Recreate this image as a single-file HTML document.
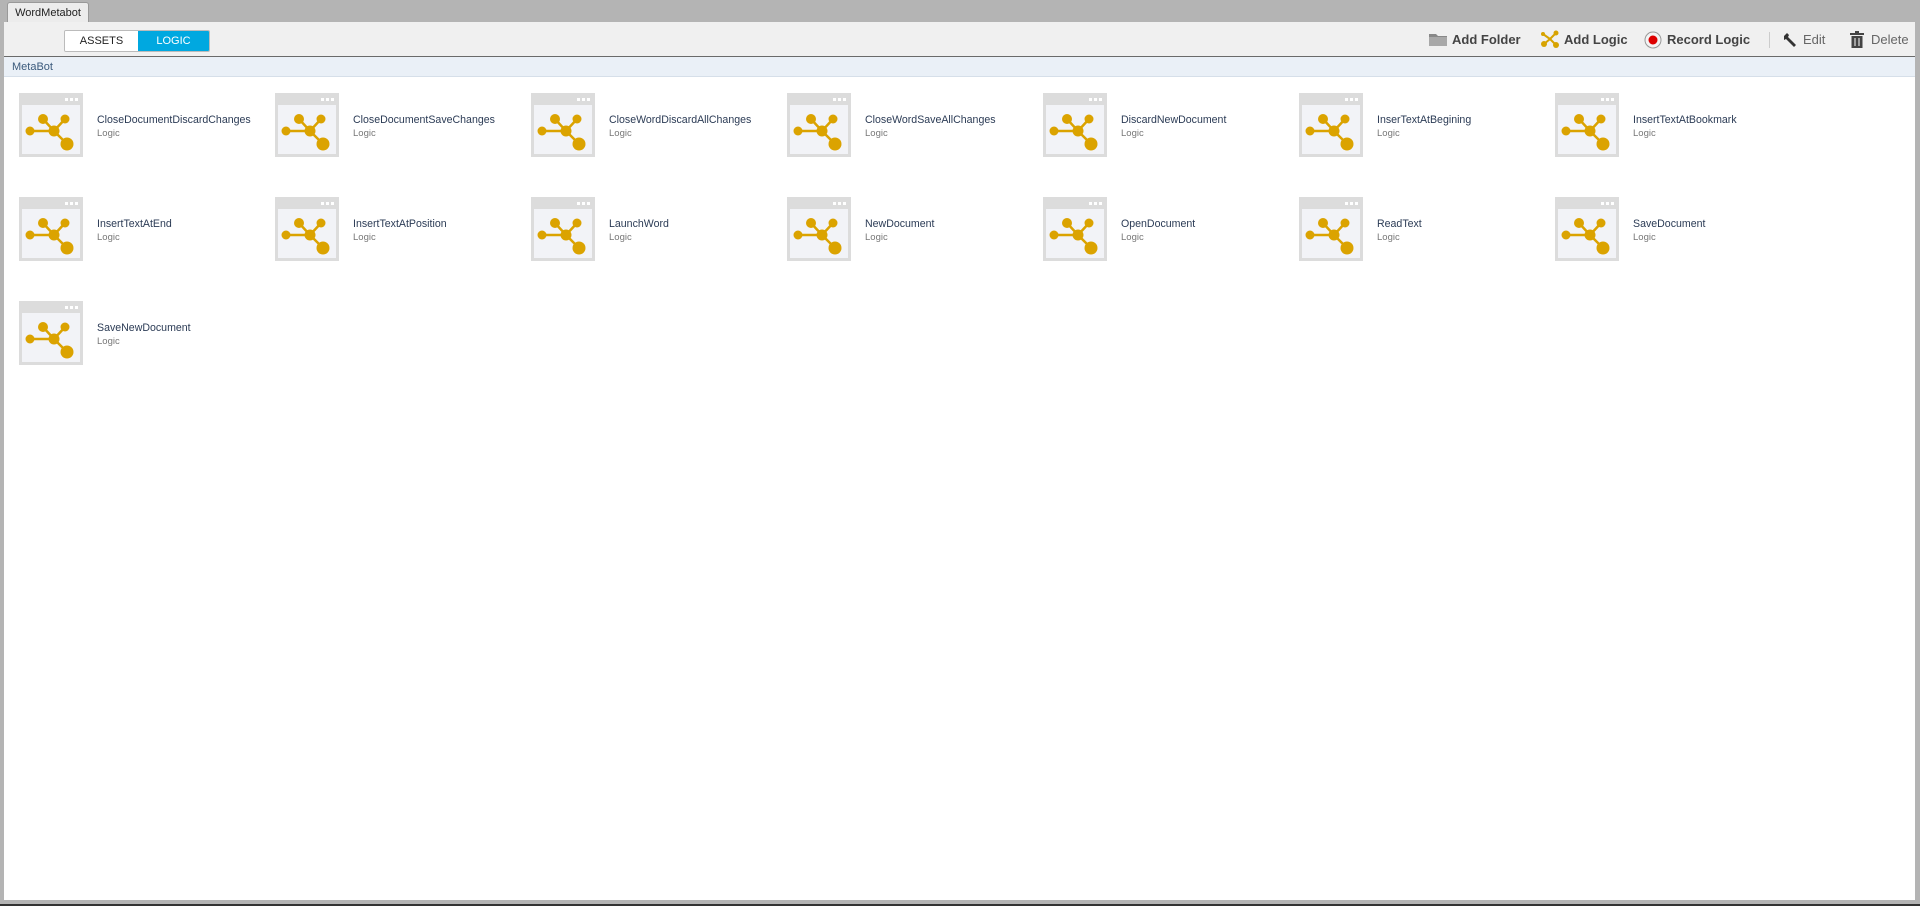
<!DOCTYPE html><html><head><style>
body{margin:0;width:1920px;height:906px;background:#b4b4b4;font-family:"Liberation Sans",Arial,sans-serif;position:relative;overflow:hidden}
.tab{position:absolute;left:7px;top:2px;width:80px;height:20px;background:#ececec;border:1px solid #999;border-bottom:none;border-radius:3px 3px 0 0;font-size:11px;line-height:20px;text-align:center;color:#222}
.panel{position:absolute;left:4px;top:22px;width:1911px;height:878px;background:#fff}
.tb{position:absolute;left:0;top:0;width:100%;height:34px;background:#f0f0f0;border-bottom:1px solid #6a6a6a}
.tog{position:absolute;left:60px;top:8px;width:144px;height:20px;border:1px solid #bbb;border-radius:2px;font-size:11px;line-height:20px;overflow:hidden}
.tog span{position:absolute;top:0;height:20px;text-align:center}
.bc{position:absolute;left:0;top:35px;width:100%;height:20px;background:#eaf0f7;border-bottom:1px solid #d6dfe9;font-size:11px;line-height:20px;color:#3b5a7c;padding-left:8px;box-sizing:border-box}
.act{position:absolute;top:10px;font-size:13px;font-weight:bold;color:#444;line-height:16px}
.act.n{font-weight:normal;color:#666}
.it{position:absolute;width:250px;height:64px}
.it svg{position:absolute;left:0;top:0}
.nm{position:absolute;left:78px;top:21px;font-size:10.6px;color:#2b3b55;white-space:nowrap}
.lg{position:absolute;left:78px;top:35px;font-size:9.5px;color:#777}
</style></head><body>
<div class="tab">WordMetabot</div>
<div class="panel">
<div class="tb">
<div class="tog"><span style="left:0;width:73px;background:#fff;color:#222">ASSETS</span><span style="left:73px;width:71px;background:#00a8e0;color:#fff">LOGIC</span></div>
<svg style="position:absolute;left:1424px;top:9px" width="20" height="16"><path d="M1 3h7l2 2h9v10H1z" fill="#888"/><path d="M1 6h18v9H1z" fill="#a8a8a8"/></svg>
<div class="act" style="left:1448px">Add Folder</div>
<svg style="position:absolute;left:1536px;top:8px" width="20" height="18"><path d="M4 14L10 9L16 3M10 9L16 15M3 4L10 9" stroke="#d7a300" stroke-width="2" fill="none"/><circle cx="4" cy="14" r="3" fill="#d7a300"/><circle cx="16" cy="3" r="2.5" fill="#d7a300"/><circle cx="16" cy="15" r="3" fill="#d7a300"/><circle cx="3" cy="4" r="2" fill="#d7a300"/></svg>
<div class="act" style="left:1560px">Add Logic</div>
<svg style="position:absolute;left:1640px;top:9px" width="18" height="18"><circle cx="9" cy="9" r="8" fill="#f4f4f4" stroke="#999"/><circle cx="9" cy="9" r="4.5" fill="#d00"/></svg>
<div class="act" style="left:1663px">Record Logic</div>
<div style="position:absolute;left:1765px;top:10px;width:1px;height:16px;background:#ccc"></div>
<svg style="position:absolute;left:1778px;top:10px" width="16" height="16"><path d="M2 4l3-3 2 2-1 2 8 8-2 2-8-8-2 1z" fill="#333"/></svg>
<div class="act n" style="left:1799px">Edit</div>
<svg style="position:absolute;left:1846px;top:9px" width="14" height="18"><rect x="0" y="2" width="14" height="2" fill="#444"/><rect x="5" y="0" width="4" height="2" fill="#444"/><rect x="1.5" y="5" width="11" height="12" fill="#444"/><path d="M5 7v8M9 7v8" stroke="#ddd" stroke-width="1.2"/></svg>
<div class="act n" style="left:1867px">Delete</div>
</div>
<div class="bc">MetaBot</div>
</div>
<div style="position:absolute;left:0;top:904px;width:1920px;height:2px;background:#333"></div>
<svg width="0" height="0" style="position:absolute"><defs><g id="ic"><rect x="0" y="0" width="64" height="64" fill="#dcdcdc"/><rect x="3" y="12" width="58" height="49" fill="#f2f3f7"/><rect x="46" y="5" width="3" height="3" fill="#fff"/><rect x="51" y="5" width="3" height="3" fill="#fff"/><rect x="56" y="5" width="3" height="3" fill="#fff"/><path d="M11 38H35L24 26M35 38L46 26M35 38L48 51" stroke="#dba300" stroke-width="2.5" fill="none"/><circle cx="11" cy="38" r="4.5" fill="#dba300"/><circle cx="35" cy="38" r="5.5" fill="#dba300"/><circle cx="24" cy="26" r="5" fill="#dba300"/><circle cx="46" cy="26" r="4.5" fill="#dba300"/><circle cx="48" cy="51" r="6.5" fill="#dba300"/></g></defs></svg>
<div id="items"></div>
<script>
var n=["CloseDocumentDiscardChanges","CloseDocumentSaveChanges","CloseWordDiscardAllChanges","CloseWordSaveAllChanges","DiscardNewDocument","InserTextAtBegining","InsertTextAtBookmark","InsertTextAtEnd","InsertTextAtPosition","LaunchWord","NewDocument","OpenDocument","ReadText","SaveDocument","SaveNewDocument"];
var h="";n.forEach(function(t,i){var x=19+(i%7)*256,y=93+Math.floor(i/7)*104;
h+='<div class="it" style="left:'+x+'px;top:'+y+'px"><svg width="64" height="64"><use href="#ic"/></svg><div class="nm">'+t+'</div><div class="lg">Logic</div></div>';});
document.getElementById("items").innerHTML=h;
</script>
</body></html>
